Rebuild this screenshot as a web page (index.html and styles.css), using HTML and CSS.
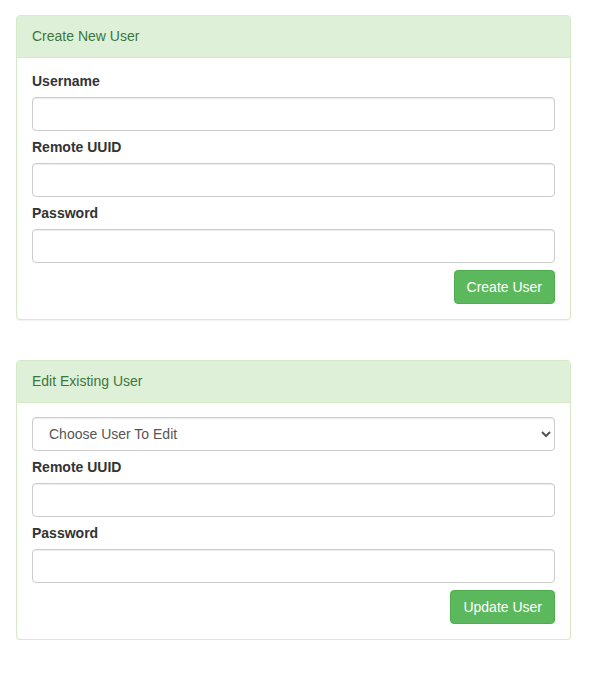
FILE: index.html
```html
<!DOCTYPE html>
<html>
<head>
<meta charset="utf-8">
<link rel="stylesheet" href="styles.css">
</head>
<body>
<div class="container">
  <div class="panel">
    <div class="panel-heading">Create New User</div>
    <div class="panel-body">
      <div class="form-group">
        <label class="label">Username</label>
        <input class="input" type="text">
      </div>
      <div class="form-group">
        <label class="label">Remote UUID</label>
        <input class="input" type="text">
      </div>
      <div class="form-group">
        <label class="label">Password</label>
        <input class="input" type="password">
      </div>
      <div class="actions">
        <button class="btn">Create User</button>
      </div>
    </div>
  </div>

  <div class="panel">
    <div class="panel-heading">Edit Existing User</div>
    <div class="panel-body">
      <div class="form-group">
        <select class="input select">
          <option>Choose User To Edit</option>
        </select>
      </div>
      <div class="form-group">
        <label class="label">Remote UUID</label>
        <input class="input" type="text">
      </div>
      <div class="form-group">
        <label class="label">Password</label>
        <input class="input" type="password">
      </div>
      <div class="actions">
        <button class="btn">Update User</button>
      </div>
    </div>
  </div>
</div>
</body>
</html>
```
FILE: styles.css
```css
* { box-sizing: border-box; }
html, body { margin: 0; padding: 0; background: #fff; }
body {
  font-family: "Liberation Sans", Arial, sans-serif;
  font-size: 14px;
  line-height: 20px;
  color: #333;
}
.container {
  padding: 15px 22px 0 16px;
  display: flex;
  flex-direction: column;
  gap: 40px;
}
.panel {
  border: 1px solid #d6e9c6;
  border-radius: 4px;
  box-shadow: 0 1px 1px rgba(0,0,0,0.05);
  background: #fff;
}
.panel-heading {
  background: #dff0d8;
  color: #3c763d;
  border-bottom: 1px solid #d6e9c6;
  border-radius: 3px 3px 0 0;
  padding: 10px 15px 11px;
  font-size: 14px;
}
.panel-body {
  padding: 13px 15px 15px;
  display: flex;
  flex-direction: column;
}
.form-group {
  display: flex;
  flex-direction: column;
  margin-bottom: 6px;
}
.label {
  font-weight: bold;
  margin-bottom: 6px;
}
.input {
  height: 34px;
  width: 100%;
  border: 1px solid #ccc;
  border-radius: 4px;
  box-shadow: inset 0 1px 1px rgba(0,0,0,0.075);
  padding: 6px 12px;
  font-family: inherit;
  font-size: 14px;
  color: #555;
  background: #fff;
}
.select {
  padding: 6px 12px 6px 12px;
  color: #555;
}
.panel-body > .form-group:first-child .select { margin-top: 1px; }
.actions {
  display: flex;
  justify-content: flex-end;
  margin-top: 1px;
}
.btn {
  background: #5cb85c;
  border: 1px solid #4cae4c;
  color: #fff;
  border-radius: 4px;
  padding: 6px 12px;
  font-family: inherit;
  font-size: 14px;
  line-height: 20px;
  height: 34px;
}
```
